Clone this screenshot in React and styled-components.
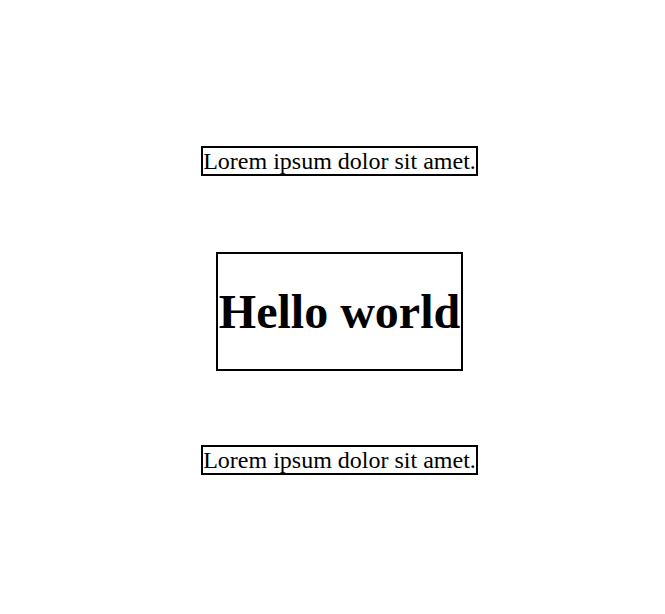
import React from 'react';
import styled, { createGlobalStyle } from 'styled-components';

const GlobalStyle = createGlobalStyle`
  body {
    margin: 0;
    background: #fff;
    color: #000;
    font-family: "Liberation Serif", "Times New Roman", serif;
  }
`;

const Wrapper = styled.div`
  display: flex;
  flex-direction: column;
  align-items: center;
  gap: 75px;
  width: 100%;
  min-height: 614px;
  padding: 146px 0 0 14px;
  box-sizing: border-box;
`;

const Caption = styled.p`
  margin: 0;
  border: 2px solid #000;
  font-size: 24px;
  line-height: 26px;
  white-space: nowrap;
`;

const Heading = styled.h1`
  margin: 1px 0 -1px;
  padding: 28px 1px;
  border: 2px solid #000;
  font-size: 48px;
  font-weight: bold;
  line-height: 59px;
  white-space: nowrap;
`;

const App = () => {
  return (
    <>
      <GlobalStyle />
      <Wrapper>
        <Caption>Lorem ipsum dolor sit amet.</Caption>
        <Heading>Hello world</Heading>
        <Caption>Lorem ipsum dolor sit amet.</Caption>
      </Wrapper>
    </>
  );
};

export default App;
